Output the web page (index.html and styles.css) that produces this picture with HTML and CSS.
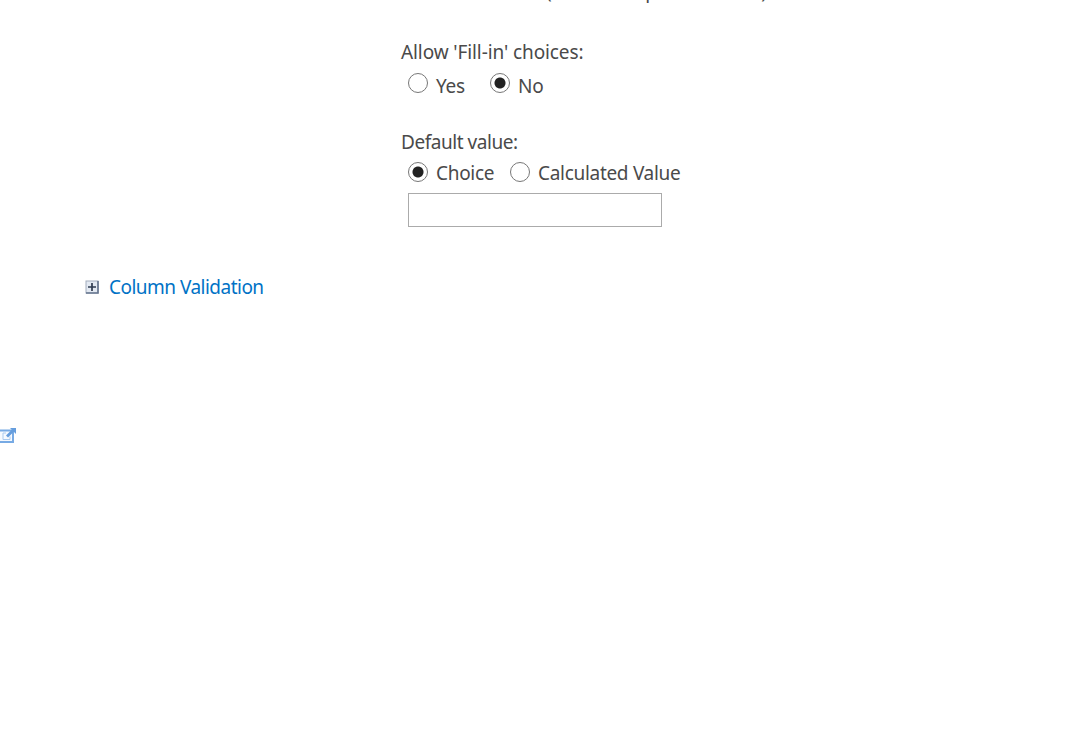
FILE: index.html
```html
<!DOCTYPE html>
<html lang="en">
<head>
    <meta charset="UTF-8">
    <title>Create Column</title>
    <link rel="stylesheet" href="styles.css">
</head>
<body>
    <form class="column-settings">
        <div class="display-choices">
            <label class="checkboxes">Checkboxes (allow multiple selections)</label>
        </div>

        <div class="field-label fill-in-label">Allow 'Fill-in' choices:</div>
        <div class="options fill-in">
            <label class="yes"><input type="radio" name="fillin"><span>Yes</span></label>
            <label class="no"><input type="radio" name="fillin" checked><span>No</span></label>
        </div>

        <div class="field-label default-label">Default value:</div>
        <div class="options">
            <label class="choice"><input type="radio" name="default" checked><span>Choice</span></label>
            <label class="calculated"><input type="radio" name="default"><span>Calculated Value</span></label>
        </div>
        <input type="text" class="default-value">
    </form>

    <div class="validation">
        <svg class="expand" width="14" height="14" viewBox="0 0 14 14">
            <rect x="1" y="1" width="12" height="12" fill="#e3e9f2" stroke="#a3adbd"/>
            <path d="M1 13h12V1" fill="none" stroke="#66758e" stroke-width="1.6"/>
            <path d="M3 7h8M7 3v8" stroke="#2f3b50" stroke-width="1.7"/>
        </svg>
        <a>Column Validation</a>
    </div>

    <svg class="popout" width="17" height="17" viewBox="0 0 17 17">
        <path d="M0 3.5h13v11.5H0" fill="#f5f9fe" stroke="#77aae4" stroke-width="2"/>
        <path d="M3 6h3M3 6v6.500h7v-3" fill="none" stroke="#a9caef" stroke-width="1"/>
        <path d="M7 9.500l6-6" stroke="#659ddd" stroke-width="2.800"/>
        <path d="M10 1h6v6z" fill="#659ddd"/>
    </svg>
</body>
</html>
```
FILE: styles.css
```css
body {
    margin: 0;
    height: 737px;
    overflow: hidden;
    background: #fff;
    color: #4a4a4a;
    font-family: "Noto Sans", "Open Sans", sans-serif;
    font-size: 19px;
    line-height: 26px;
}
.column-settings {
    margin-left: 401px;
    white-space: nowrap;
}
/* scrolled almost out of view */
.display-choices {
    height: 38px;
}
.checkboxes {
    display: block;
    margin-left: 38px;
    margin-top: -22px;
    float: left;
    letter-spacing: -0.35px;
}
.field-label {
    letter-spacing: -0.45px;
}
.fill-in-label {
    padding-top: 1px;
    letter-spacing: -0.1px;
}
.options {
    display: flex;
    margin-left: 7px;
    height: 26px;
}
.fill-in {
    margin-top: 8px;
}
.options label {
    display: flex;
    letter-spacing: -0.3px;
}
.default-label {
    margin-top: 30px;
    margin-bottom: 5px;
}
input[type="radio"] {
    appearance: none;
    box-sizing: border-box;
    width: 20px;
    height: 20px;
    margin: 2px 8px 0 0;
    border: 1.5px solid #777;
    border-radius: 50%;
    background: #fff;
}
.fill-in input[type="radio"] {
    margin-top: 0;
}
input[type="radio"]:checked {
    background: radial-gradient(circle, #222 5px, #fff 6px);
}
.yes {
    width: 82px;
}
.choice {
    width: 102px;
}
.default-value {
    display: block;
    box-sizing: border-box;
    width: 254px;
    height: 34px;
    margin: 7px 0 0 7px;
    padding: 0 8px;
    border: 1.5px solid #ababab;
    font: inherit;
}
.validation {
    display: flex;
    align-items: center;
    margin: 47px 0 0 85px;
    color: #0072c6;
}
.validation a {
    margin-left: 10px;
    letter-spacing: -0.52px;
}
.popout {
    display: block;
    margin-top: 127px;
}
```
